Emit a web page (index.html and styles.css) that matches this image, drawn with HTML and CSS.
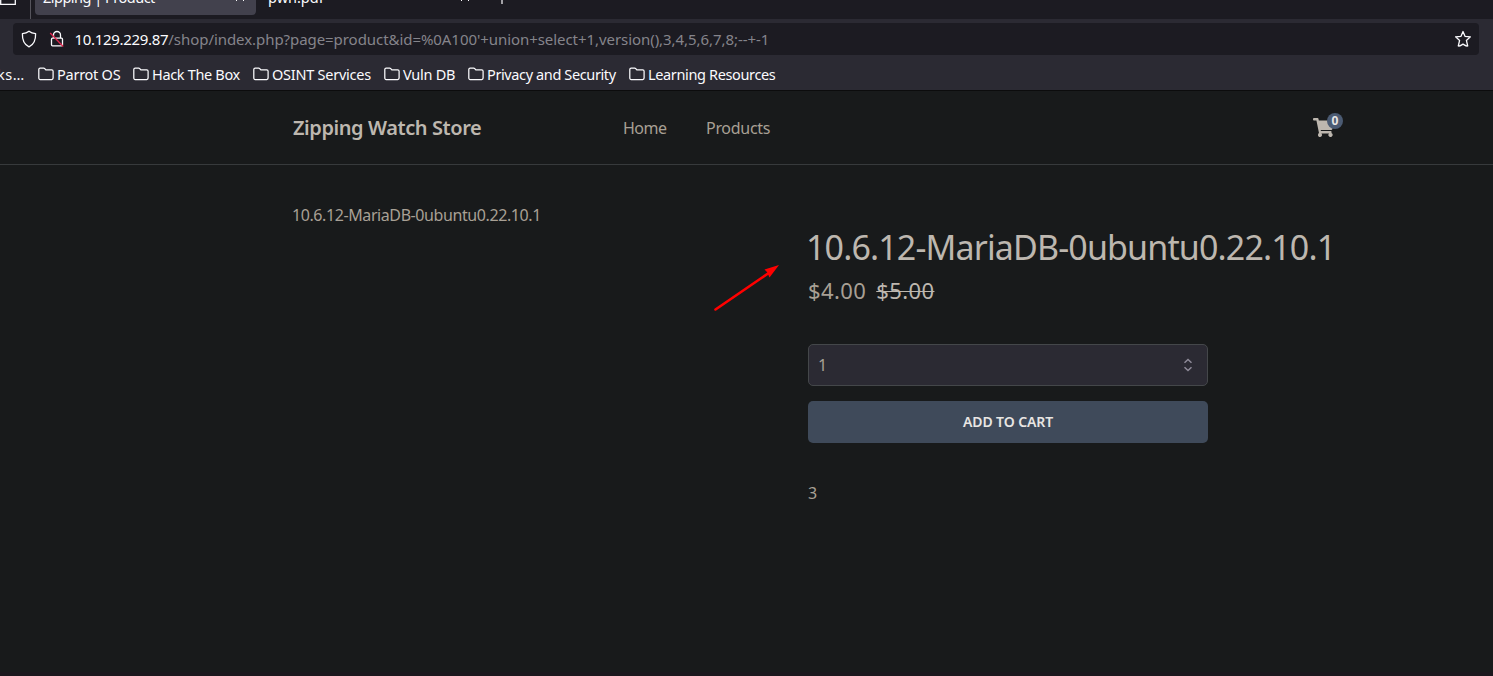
FILE: index.html
```html
<!DOCTYPE html>
<html lang="en">
<head>
<meta charset="utf-8">
<title>Zipping | Product</title>
<link rel="stylesheet" href="styles.css">
</head>
<body>
<svg class="defs" width="0" height="0">
  <symbol id="folder" viewBox="0 0 16 14"><path d="M2.200 1.200h3.500c.5 0 .8.2 1.100.5l1 1.100h5.900c.8 0 1.400.6 1.400 1.400v6.900c0 .8-.6 1.400-1.400 1.400H2.200c-.8 0-1.400-.6-1.400-1.400V2.600c0-.8.6-1.400 1.400-1.400z" fill="none" stroke="#fbfbfe" stroke-width="1.250"/></symbol>
</svg>
<div class="tabs">
  <svg class="tab-icon" width="19" height="7" viewBox="0 0 19 7"><path d="M.7 0v4.300h14.600V0" fill="none" stroke="#fbfbfe" stroke-width="1.300"/></svg>
  <div class="tab active"><span class="tab-title">Zipping | Product</span><svg class="close" width="10" height="10" viewBox="0 0 10 10"><path d="M1 1l8 8M9 1L1 9" stroke="#fbfbfe"/></svg></div>
  <div class="tab"><span class="tab-title">pwn.pdf</span><svg class="close" width="10" height="10" viewBox="0 0 10 10"><path d="M1 1l8 8M9 1L1 9" stroke="#fbfbfe"/></svg></div>
  <svg class="plus" width="12" height="12" viewBox="0 0 12 12"><path d="M6 0v12M0 6h12" stroke="#fbfbfe" stroke-width="1.200"/></svg>
</div>
<div class="toolbar">
  <div class="urlbar">
    <svg width="16" height="18" viewBox="0 0 16 18"><path d="M8 1.200c2 1.700 4.200 2.300 6.600 2.500.2 5.600-.9 10.400-6.600 13.100C2.300 14.100 1.200 9.300 1.400 3.700 3.800 3.500 6 2.900 8 1.200z" fill="none" stroke="#fbfbfe" stroke-width="1.300" stroke-linejoin="round"/></svg>
    <svg class="lock" width="16" height="18" viewBox="0 0 16 18"><path d="M4.500 8V5a3.500 3.500 0 0 1 7 0v3M3.500 8.200h9q1 0 1 1v5.600q0 1-1 1h-9q-1 0-1-1V9.200q0-1 1-1z" fill="none" stroke="#fbfbfe" stroke-width="1.300"/><path d="M1.200 3L14.200 16.500" stroke="#e22850" stroke-width="1.300"/></svg>
    <span class="url"><span class="host">10.129.229.87</span>/shop/index.php?page=product&amp;id=%0A100'+union+select+1,version(),3,4,5,6,7,8;--+-1</span>
    <svg class="star" width="18" height="18" viewBox="0 0 18 18"><path d="M9 1.500l2 4.800 5.400.5-4 3.600 1.300 5.600c-1.500.6-3.100-1-4.700-1.900-1.600.9-3.200 2.500-4.700 1.900l1.300-5.600-4-3.600L7 6.300z" fill="none" stroke="#fbfbfe" stroke-width="1.300" stroke-linejoin="round"/></svg>
  </div>
  <div class="bookmarks">
    <span class="bm more">ks…</span>
    <span class="bm parrot"><svg width="16" height="14"><use href="#folder"/></svg>Parrot OS</span>
    <span class="bm htb"><svg width="16" height="14"><use href="#folder"/></svg>Hack The Box</span>
    <span class="bm osint"><svg width="16" height="14"><use href="#folder"/></svg>OSINT Services</span>
    <span class="bm vuln"><svg width="16" height="14"><use href="#folder"/></svg>Vuln DB</span>
    <span class="bm privacy"><svg width="16" height="14"><use href="#folder"/></svg>Privacy and Security</span>
    <span class="bm learning"><svg width="16" height="14"><use href="#folder"/></svg>Learning Resources</span>
  </div>
</div>
<header class="site-header">
  <div class="brand">Zipping Watch Store</div>
  <nav class="nav"><span class="home">Home</span><span class="products">Products</span></nav>
  <div class="cart">
    <svg width="21" height="19" viewBox="0 0 576 512" preserveAspectRatio="none"><path fill="#bdb7af" d="M528 301l47-208c4-15-8-29-23-29H159l-9-45C148 8 138 0 127 0H24C11 0 0 11 0 24v16c0 13 11 24 24 24h70l70 343c-17 10-28 28-28 49a56 56 0 1 0 95-40h210a56 56 0 1 0 64-10l5-25c3-15-8-29-24-29H218l-7-32h294c11 0 21-8 23-19z"/></svg>
    <span class="badge">0</span>
  </div>
</header>
<main class="product">
  <div class="image-alt">10.6.12-MariaDB-0ubuntu0.22.10.1</div>
  <div class="details">
    <h1>10.6.12-MariaDB-0ubuntu0.22.10.1</h1>
    <div class="prices"><span>$4.00</span><span class="rrp">$5.00</span></div>
    <div class="quantity"><span>1</span><svg width="10" height="14" viewBox="0 0 10 14"><path d="M1.500 4.700L5 1.500l3.500 3.200M1.500 9.300L5 12.500l3.500-3.200" fill="none" stroke="#8f8b99" stroke-width="1.500"/></svg></div>
    <div class="add"><span>ADD TO CART</span></div>
    <div class="desc">3</div>
  </div>
  <svg class="arrow" width="70" height="50" viewBox="0 0 70 50"><path d="M5.500 44.500L58 8.500" stroke="#f00" stroke-width="2.600" stroke-linecap="round"/><path d="M69 0L54.500 4.500l2.500 2.500 2.500 5.500z" fill="#f00"/></svg>
</main>
<div class="edge"></div>
</body>
</html>
```
FILE: styles.css
```css
* { box-sizing: border-box; }
body { margin: 0; height: 676px; overflow: hidden; display: flex; flex-direction: column; background: #181a1b; color: #a8a095; font-family: "Noto Sans", sans-serif; font-size: 16px; white-space: nowrap; }
svg { display: block; flex: none; }
.defs { position: absolute; }
.tabs { height: 19px; flex: none; display: flex; background: #1c1b22; color: #fbfbfe; font-size: 14.500px; overflow: hidden; }
.tab-icon { margin-right: 12px; }
.tab { height: 15px; width: 221px; margin-right: 4px; padding: 0 8px; display: flex; justify-content: space-between; }
.tab.active { position: relative; background: #42414d; border-radius: 0 0 4px 4px; margin-left: 4px; }
.tab.active::before { content: ""; position: absolute; left: -5px; top: 0; width: 1px; height: 19px; background: #55545c; }
.tab-title { line-height: 20px; margin-top: -13px; }
.active .tab-title { letter-spacing: -0.500px; }
.close { margin: -8px 3px 0 0; }
.plus { margin: -8px 0 0 11px; }
.toolbar { height: 72px; flex: none; background: #2b2a33; border-bottom: 1px solid #0c0c0d; padding: 4px 14px 0 13px; }
.urlbar { height: 32px; background: #1c1b22; border-radius: 4px; display: flex; align-items: center; padding: 0 8px; font-size: 15px; }
.lock { margin-left: 12px; }
.url { color: #85848b; margin-left: 9.500px; letter-spacing: -0.060px; }
.host { color: #fbfbfe; letter-spacing: -0.310px; }
.star { margin-left: auto; margin-right: -1px; }
.bookmarks { margin-left: -16px; height: 37px; display: flex; align-items: center; color: #fbfbfe; font-size: 14.500px; }
.bm { display: flex; align-items: center; gap: 3px; flex: none; }
.more { width: 41px; letter-spacing: 0.500px; }
.parrot { width: 95px; letter-spacing: -0.250px; }
.htb { width: 120px; letter-spacing: -0.330px; }
.osint { width: 131px; letter-spacing: -0.250px; }
.vuln { width: 84px; letter-spacing: -0.250px; }
.privacy { width: 161px; letter-spacing: -0.380px; }
.learning { letter-spacing: -0.360px; }
.site-header { height: 74px; flex: none; border-bottom: 1px solid #373a3c; padding: 0 150px 0 293px; display: flex; align-items: center; }
.brand { width: 330px; font-size: 20px; font-weight: 600; color: #bdb7af; letter-spacing: -0.420px; }
.nav { display: flex; }
.home { width: 83px; letter-spacing: -0.500px; }
.products { letter-spacing: -0.300px; }
.cart { position: relative; margin-left: auto; width: 30px; height: 24px; padding-top: 2px; }
.badge { position: absolute; right: 0; top: -3px; width: 16px; height: 16px; border-radius: 50%; background: #4b5b73; color: #e8e6e3; font-size: 12px; font-weight: 700; line-height: 16px; text-align: center; }
.product { position: relative; flex: 1; display: grid; grid-template-columns: 515px 1fr; padding: 40px 0 0 293px; }
.image-alt { margin-left: -1px; line-height: 21px; letter-spacing: -0.410px; }
.details { padding-top: 18px; }
h1 { margin: 0 0 0 -2px; height: 48px; line-height: 48px; font-size: 34px; font-weight: 400; color: #bdb7af; letter-spacing: -0.860px; }
.prices { display: flex; gap: 10px; height: 40px; line-height: 38px; font-size: 22px; letter-spacing: 0.400px; }
.rrp { color: #bdb7af; text-decoration: line-through 1px; }
.quantity { width: 400px; height: 42px; margin-top: 33px; padding: 0 14px 0 9px; border: 1px solid #44474a; border-radius: 5px; background: #2b2a33; display: flex; align-items: center; justify-content: space-between; }
.add { width: 400px; height: 42px; margin-top: 15px; padding-bottom: 2px; border-radius: 5px; background: #3f4a5a; color: #e8e6e3; font-size: 14px; font-weight: 600; letter-spacing: -0.100px; display: flex; align-items: center; justify-content: center; }
.desc { margin-top: 40px; line-height: 20px; }
.arrow { position: absolute; left: 710px; top: 100px; }
.edge { height: 4px; flex: none; background: #1b171d; }
```
